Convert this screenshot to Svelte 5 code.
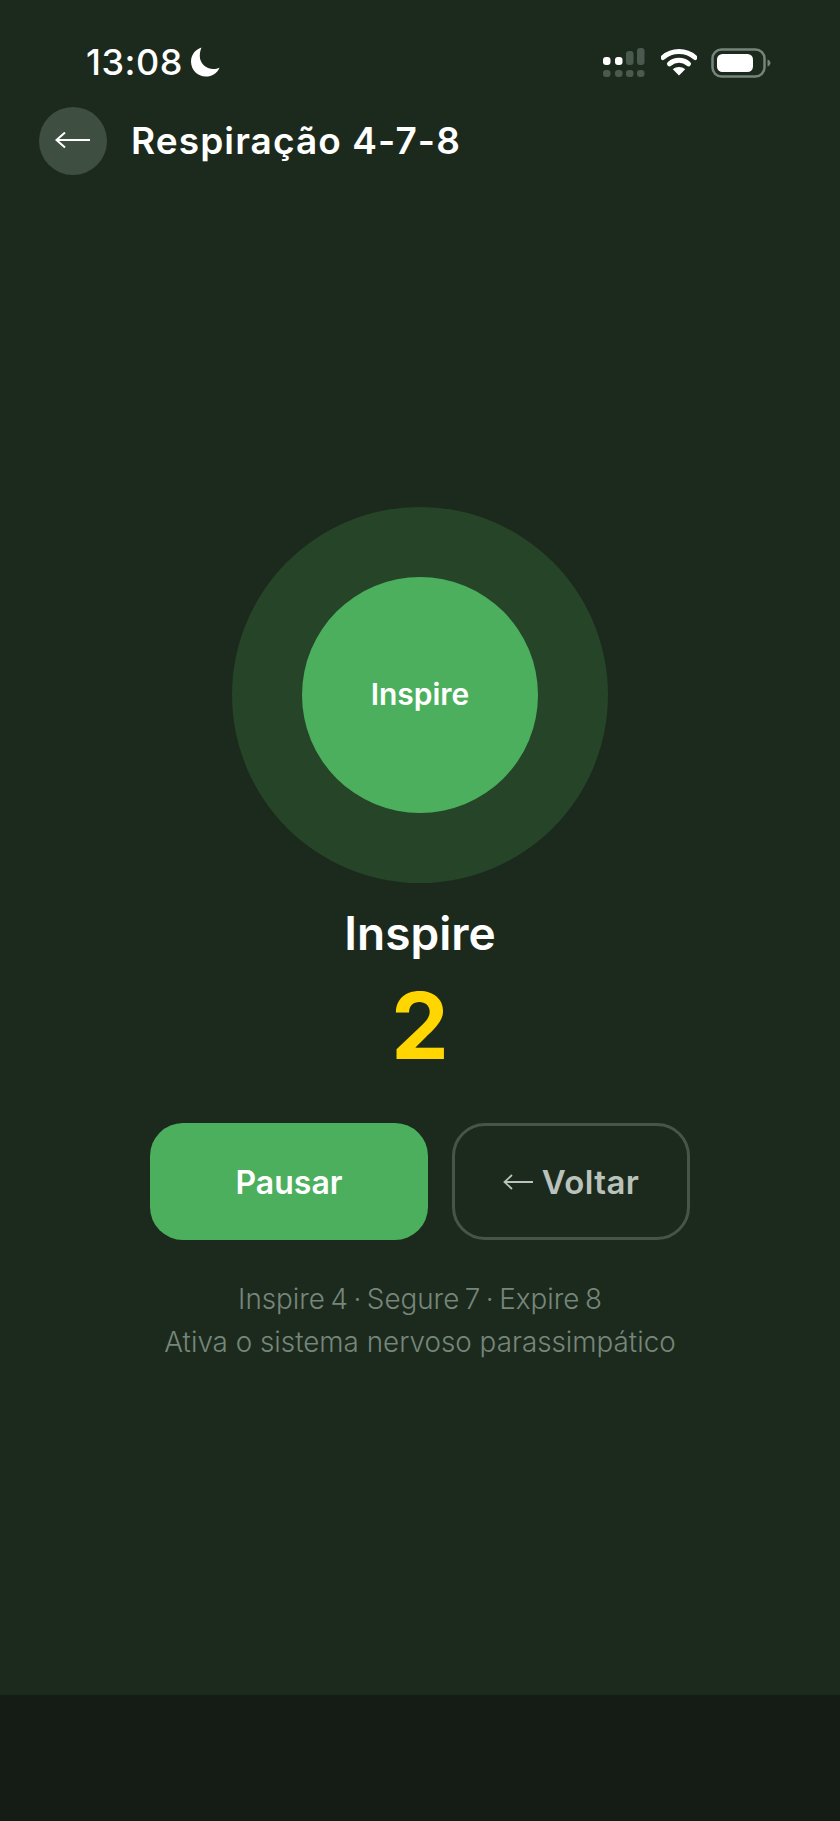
<script>
  let phase = 'Inspire';
  let count = 2;
  const cells = [
    { x: 0, y: 9, h: 8, on: true },
    { x: 12, y: 9, h: 8, on: true },
    { x: 23, y: 3, h: 14, on: false },
    { x: 34, y: 0, h: 17, on: false }
  ];
</script>

<div class="screen">
  <div class="page">
    <div class="status">
      <div class="time">
        <span>13:08</span>
        <svg width="30" height="30" viewBox="0 0 30 30">
          <path d="M11.5 0.5C6.8 2.2 1 6.4 1 14.5 1 23 7.6 29.5 15.8 29.5c6 0 11.400-3.200 13.700-8.800-2 0.900-4 1.200-6 1.200C15.800 21.900 9.800 16.300 9.800 9c0-3 0.500-5.800 1.700-8.500z" fill="#fff" />
        </svg>
      </div>
      <div class="indicators">
        <svg class="signal" width="44" height="30" viewBox="0 0 44 30">
          {#each cells as c}
            <rect x={c.x} y={c.y} width="7.500" height={c.h} rx="3" fill={c.on ? '#fff' : '#4b5a4e'} />
            <rect x={c.x} y="22" width="7.500" height="7" rx="3" fill="#4b5a4e" />
          {/each}
        </svg>
        <svg class="wifi" width="36" height="28" viewBox="0 0 36 28">
          <path d="M2 9.500C11 1.500 25 1.500 34 9.500" fill="none" stroke="#fff" stroke-width="5" stroke-linecap="round" />
          <path d="M8.500 15.800C14 11 22 11 27.500 15.800" fill="none" stroke="#fff" stroke-width="5" stroke-linecap="round" />
          <path d="M18 27.500L11.800 21.200C15.500 18.300 20.500 18.300 24.200 21.200z" fill="#fff" />
        </svg>
        <svg class="battery" width="60" height="30" viewBox="0 0 60 30">
          <rect x="1.500" y="1.500" width="52" height="27" rx="9" fill="none" stroke="#76847a" stroke-width="2.500" />
          <rect x="6" y="6" width="36" height="18" rx="5.500" fill="#fff" />
          <path d="M56.500 11.500c2 0.600 3 2 3 3.500s-1 2.900-3 3.500z" fill="#76847a" />
        </svg>
      </div>
    </div>

    <header class="header">
      <button class="back" aria-label="Voltar">
        <svg width="36" height="18" viewBox="0 0 36 18">
          <path d="M35 8H1.500M10 0.500L1.500 8l8.500 7.500" fill="none" stroke="#fff" stroke-width="2" />
        </svg>
      </button>
      <h1>Respiração 4-7-8</h1>
    </header>

    <main class="main">
      <div class="halo">
        <div class="core">{phase}</div>
      </div>
      <div class="phase">{phase}</div>
      <div class="count">{count}</div>
      <div class="actions">
        <button class="btn primary">Pausar</button>
        <button class="btn ghost">
          <svg width="30" height="16" viewBox="0 0 30 16">
            <path d="M30 8H1.500M9 1L1.500 8 9 15" fill="none" stroke="#b9c2bb" stroke-width="1.800" />
          </svg>
          <span>Voltar</span>
        </button>
      </div>
      <div class="note">
        <p class="tight">Inspire 4 · Segure 7 · Expire 8</p>
        <p>Ativa o sistema nervoso parassimpático</p>
      </div>
    </main>
  </div>
  <div class="bottom"></div>
</div>

<style>
  :global(body) {
    margin: 0;
    background: #151c15;
  }

  .screen {
    width: 840px;
    height: 1821px;
    display: flex;
    flex-direction: column;
    font-family: Inter, 'Noto Sans', sans-serif;
    color: #fff;
  }

  .page {
    height: 1695px;
    display: flex;
    flex-direction: column;
    background: #1c2a1d;
  }

  .bottom {
    flex: 1;
    background: #151c15;
  }

  .status {
    height: 107px;
    box-sizing: border-box;
    padding: 44px 69px 0 86px;
    display: flex;
    justify-content: space-between;
    align-items: flex-start;
  }

  .time {
    display: flex;
    align-items: center;
    gap: 7px;
    font-size: 36px;
    font-weight: 500;
    letter-spacing: 0.5px;
    line-height: 36px;
  }

  .indicators {
    display: flex;
    align-items: flex-start;
    gap: 14px;
    padding-top: 4px;
  }

  .header {
    height: 68px;
    padding-left: 39px;
    display: flex;
    align-items: center;
    gap: 24px;
  }

  .back {
    width: 68px;
    height: 68px;
    padding: 0;
    border: none;
    border-radius: 50%;
    background: #3e4f42;
    display: flex;
    align-items: center;
    justify-content: center;
  }

  h1 {
    margin: 0 0 2px;
    font-size: 37px;
    font-weight: 600;
    letter-spacing: 1.1px;
  }

  .main {
    flex: 1;
    display: flex;
    flex-direction: column;
    align-items: center;
    justify-content: center;
  }

  .halo {
    width: 376px;
    height: 376px;
    border-radius: 50%;
    background: #254428;
    display: flex;
    align-items: center;
    justify-content: center;
  }

  .core {
    width: 236px;
    height: 236px;
    padding-bottom: 2px;
    box-sizing: border-box;
    border-radius: 50%;
    background: #4caf5e;
    display: flex;
    align-items: center;
    justify-content: center;
    font-size: 30px;
    font-weight: 600;
  }

  .phase {
    margin-top: 24px;
    font-size: 46px;
    font-weight: 600;
    line-height: 52px;
  }

  .count {
    margin-top: 13px;
    font-size: 92px;
    font-weight: 700;
    line-height: 108px;
    color: #ffd600;
  }

  .actions {
    margin-top: 43px;
    display: flex;
    gap: 24px;
  }

  .btn {
    height: 117px;
    box-sizing: border-box;
    padding: 2px 0 0;
    border-radius: 33px;
    font-family: inherit;
    font-size: 32px;
    font-weight: 600;
    display: flex;
    align-items: center;
    justify-content: center;
  }

  .primary {
    width: 278px;
    border: none;
    background: #4caf5e;
    color: #fff;
  }

  .ghost {
    width: 238px;
    gap: 9px;
    border: 3px solid #465549;
    background: transparent;
    color: #b9c2bb;
    font-size: 33px;
    letter-spacing: 0.4px;
  }

  .note {
    margin-top: 38px;
    font-size: 27.800px;
    font-weight: 300;
    line-height: 43px;
    text-align: center;
    color: #76867a;
  }

  .note p {
    margin: 0;
  }

  .tight {
    word-spacing: -2.300px;
  }
</style>
